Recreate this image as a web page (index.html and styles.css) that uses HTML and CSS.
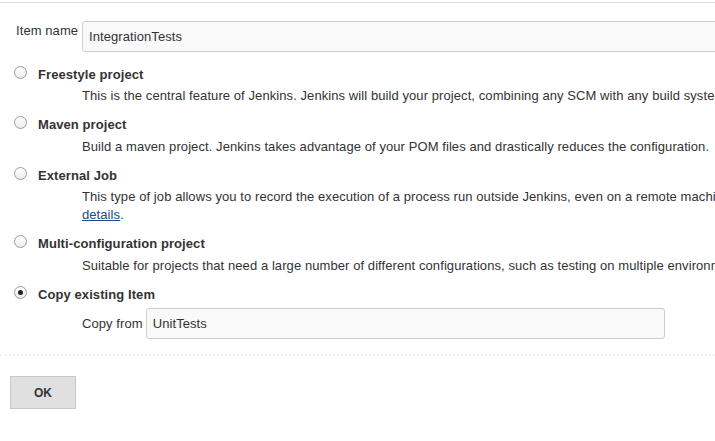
FILE: index.html
```html
<!DOCTYPE html>
<html>
<head>
<meta charset="utf-8">
<link rel="stylesheet" href="styles.css">
</head>
<body>
<div class="topbar"></div>
<form class="page">
  <div class="name-row">
    <label class="name-label" for="name">Item name</label>
    <input class="text-input name-input" id="name" type="text" value="IntegrationTests">
  </div>
  <div class="options">
    <div class="option">
      <label class="opt-head"><input type="radio" name="mode" class="radio"><span class="opt-title">Freestyle project</span></label>
      <div class="opt-desc">This is the central feature of Jenkins. Jenkins will build your project, combining any SCM with any build system, and this can be even used for something other than software build.</div>
    </div>
    <div class="option">
      <label class="opt-head"><input type="radio" name="mode" class="radio"><span class="opt-title">Maven project</span></label>
      <div class="opt-desc">Build a maven project. Jenkins takes advantage of your POM files and drastically reduces the configuration.</div>
    </div>
    <div class="option">
      <label class="opt-head"><input type="radio" name="mode" class="radio"><span class="opt-title">External Job</span></label>
      <div class="opt-desc wrap">This type of job allows you to record the execution of a process run outside Jenkins, even on a remote machine. See<br><a href="#" class="link">details</a>.</div>
    </div>
    <div class="option">
      <label class="opt-head"><input type="radio" name="mode" class="radio"><span class="opt-title">Multi-configuration project</span></label>
      <div class="opt-desc">Suitable for projects that need a large number of different configurations, such as testing on multiple environments, platform-specific builds, etc.</div>
    </div>
    <div class="option last">
      <label class="opt-head"><input type="radio" name="mode" class="radio" checked><span class="opt-title">Copy existing Item</span></label>
      <div class="copy-row">
        <label class="copy-label" for="from">Copy from</label>
        <input class="text-input copy-input" id="from" type="text" value="UnitTests">
      </div>
    </div>
  </div>
  <div class="sep"></div>
  <div class="actions">
    <button type="button" class="ok-btn">OK</button>
  </div>
</form>
</body>
</html>
```

FILE: styles.css
```css
html, body {
  margin: 0;
  padding: 0;
  overflow: hidden;
  background: #fff;
}
body {
  font-family: "Liberation Sans", Arial, sans-serif;
  font-size: 13px;
  letter-spacing: 0.08px;
  color: #333;
  width: 715px;
  height: 441px;
}
.topbar {
  height: 2px;
  border-bottom: 1px solid #dcdcd6;
}
.page {
  margin: 0;
}
.name-row {
  display: flex;
  align-items: flex-start;
  padding: 18px 0 0 16px;
}
.name-label {
  width: 62px;
  margin-right: 4px;
  padding-top: 2px;
  line-height: 16px;
  white-space: nowrap;
}
.text-input {
  box-sizing: border-box;
  font-family: "Liberation Sans", Arial, sans-serif;
  font-size: 13px;
  letter-spacing: 0.08px;
  color: #333;
  background: #f9f9f9;
  border: 1px solid #cccccc;
  border-radius: 3px;
  padding: 0 6px;
  margin: 0;
  outline: none;
}
.name-input {
  width: 660px;
  height: 31px;
  flex: none;
}
.options {
  padding: 12px 0 0 14px;
}
.option {
  margin-bottom: 10.5px;
}
.option.last {
  margin-bottom: 0;
}
.opt-head {
  display: flex;
  align-items: center;
  height: 20px;
}
.radio {
  appearance: none;
  -webkit-appearance: none;
  box-sizing: border-box;
  width: 13px;
  height: 13px;
  margin: 0 11px 4px 0;
  border: 1px solid #9a9a9a;
  border-radius: 50%;
  background: linear-gradient(#ffffff, #ececec);
  position: relative;
  flex: none;
}
.radio:checked::after {
  content: "";
  position: absolute;
  left: 3px;
  top: 3px;
  width: 5px;
  height: 5px;
  border-radius: 50%;
  background: #222;
}
.opt-title {
  font-weight: bold;
  white-space: nowrap;
}
.opt-desc {
  padding: 3px 0 0 68px;
  line-height: 17px;
  white-space: nowrap;
}
.opt-desc.wrap {
  line-height: 17.5px;
}
.link {
  color: #204a87;
  text-decoration: underline;
}
.copy-row {
  display: flex;
  align-items: center;
  padding: 4px 0 0 68px;
}
.copy-label {
  margin-right: 3px;
  white-space: nowrap;
}
.copy-input {
  width: 519px;
  height: 31px;
}
.sep {
  margin: 15px 0 0 0;
  height: 0;
  border-top: 2px dotted #f2f2f2;
}
.actions {
  padding: 20px 0 0 10px;
}
.ok-btn {
  box-sizing: border-box;
  width: 66px;
  height: 33px;
  background: #e0e0e0;
  border: 1px solid #c8c8c8;
  border-radius: 0;
  font-family: "Liberation Sans", Arial, sans-serif;
  font-size: 12px;
  font-weight: bold;
  color: #333;
  padding: 0;
}
```
